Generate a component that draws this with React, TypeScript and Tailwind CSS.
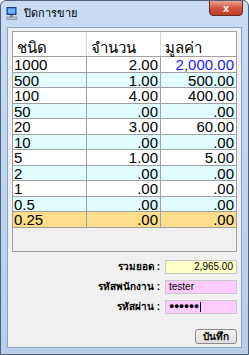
import React from 'react';

type Row = { kind: string; qty: string; value: string };

const rows: Row[] = [
  { kind: '1000', qty: '2.00', value: '2,000.00' },
  { kind: '500', qty: '1.00', value: '500.00' },
  { kind: '100', qty: '4.00', value: '400.00' },
  { kind: '50', qty: '.00', value: '.00' },
  { kind: '20', qty: '3.00', value: '60.00' },
  { kind: '10', qty: '.00', value: '.00' },
  { kind: '5', qty: '1.00', value: '5.00' },
  { kind: '2', qty: '.00', value: '.00' },
  { kind: '1', qty: '.00', value: '.00' },
  { kind: '0.5', qty: '.00', value: '.00' },
  { kind: '0.25', qty: '.00', value: '.00' },
];

// background per row: alternating white / light cyan, last one selected
const rowBg = (i: number) => {
  if (i === rows.length - 1) return 'bg-[#fbdd8c]';
  return i % 2 === 0 ? 'bg-white' : 'bg-[#e0fcfc]';
};

const PcIcon = () => (
  <svg width="12" height="13" viewBox="0 0 12 13">
    <rect x="1" y="0.5" width="9" height="7" fill="#3a6fd8" stroke="#1d3f8a" />
    <rect x="2" y="1.5" width="7" height="5" fill="#6fb4f4" />
    <rect x="4" y="8" width="3" height="2" fill="#7d8a99" />
    <rect x="1" y="10" width="10" height="2.5" fill="#b9c2cc" stroke="#6b7684" strokeWidth="0.6" />
  </svg>
);

export default function App() {
  return (
    <div
      className="w-[249px] h-[355px] flex flex-col rounded-t-[6px] border border-[#4f6178] bg-gradient-to-b from-[#c7dcf3] to-[#b7cfeb] overflow-hidden"
      style={{ fontFamily: 'Tahoma, "Liberation Sans", sans-serif' }}
    >
      {/* title bar */}
      <div className="h-[26px] flex items-start relative">
        <div className="flex items-center gap-[6px] pl-[5px] pt-[6px]">
          <PcIcon />
          <span className="text-[11px] text-black leading-none">ปิดการขาย</span>
        </div>
        <div className="absolute right-[5px] top-[-1px] w-[34px] h-[16px] rounded-b-[4px] border border-[#6a2a22] bg-gradient-to-b from-[#e9a393] via-[#d2553e] to-[#c13e24] flex items-center justify-center">
          <span className="text-white text-[11px] font-bold leading-none">x</span>
        </div>
      </div>

      {/* client area */}
      <div className="flex-1 mx-[6px] mb-[6px] border border-[#8aa3c2] bg-[#f0f0f0] flex flex-col px-[4px] pt-[3px]">
        {/* grid */}
        <div className="h-[221px] border border-[#a0a0a0] bg-[#f0f0f0] flex flex-col">
          <div className="h-[25px] bg-white grid grid-cols-[74px_74px_1fr] border-b border-[#a0a0a0] items-end">
            <div className="h-full border-r border-[#d8d8d8] text-[15px] leading-none pl-[4px] pt-[8px] text-black">ชนิด</div>
            <div className="h-full border-r border-[#d8d8d8] text-[15px] leading-none pl-[4px] pt-[8px] text-black">จำนวน</div>
            <div className="h-full text-[15px] leading-none pl-[4px] pt-[8px] text-black">มูลค่า</div>
          </div>
          {rows.map((r, i) => (
            <div
              key={r.kind}
              className={`h-[15.5px] grid grid-cols-[74px_74px_1fr] border-b border-[#a0a0a0] text-[15px] leading-none ${rowBg(i)}`}
              style={{ fontFamily: '"Liberation Sans", Arial, sans-serif' }}
            >
              <div className="border-r border-[#a0a0a0] pl-[1px] flex items-center">{r.kind}</div>
              <div className="border-r border-[#a0a0a0] pr-[2px] flex items-center justify-end">{r.qty}</div>
              <div className={`pr-[2px] flex items-center justify-end ${i === 0 ? 'text-[#1a1aff]' : 'text-black'}`}>{r.value}</div>
            </div>
          ))}
        </div>

        {/* totals / login */}
        <div className="flex flex-col gap-[5px] mt-[7px] text-[10px]">
          <div className="flex items-center justify-end gap-[5px]">
            <span className="font-bold">รวมยอด :</span>
            <div className="w-[72px] h-[14px] bg-[#ffffc8] border border-[#c8c8c8] flex items-center justify-end pr-[3px]">2,965.00</div>
          </div>
          <div className="flex items-center justify-end gap-[5px]">
            <span className="font-bold">รหัสพนักงาน :</span>
            <div className="w-[72px] h-[14px] bg-[#ffccff] border border-[#c8c8c8] flex items-center pl-[3px]">tester</div>
          </div>
          <div className="flex items-center justify-end gap-[5px]">
            <span className="font-bold">รหัสผ่าน :</span>
            <div className="w-[72px] h-[14px] bg-[#ffccff] border border-[#c8c8c8] flex items-center pl-[3px]">
              <span className="text-[9px] tracking-[-0.5px] leading-none">●●●●●●</span>
              <span className="w-px h-[10px] bg-black ml-[1px]" />
            </div>
          </div>
        </div>

        <div className="flex justify-end mt-[15px]">
          <div className="w-[42px] h-[15px] rounded-[3px] border border-[#8a8a8a] bg-gradient-to-b from-[#f4f4f4] to-[#dedede] flex items-center justify-center text-[10px] font-bold">
            บันทึก
          </div>
        </div>
      </div>
    </div>
  );
}
